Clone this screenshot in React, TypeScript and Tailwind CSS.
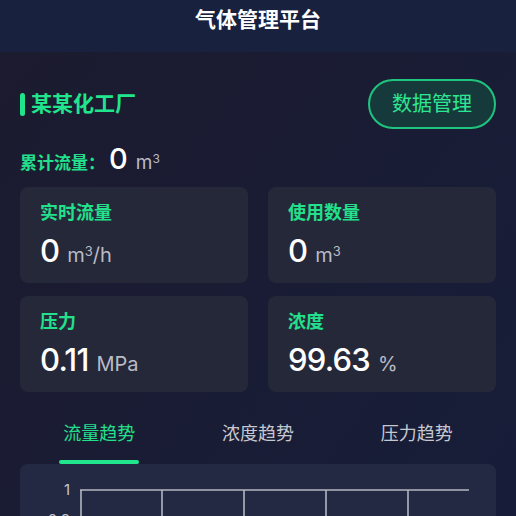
// Gas management dashboard (mobile)
const cjk = { fontFamily: 'Inter, "Noto Sans CJK SC", "Noto Sans", sans-serif' };

interface StatCardProps {
  label: string;
  value: string;
  unit: React.ReactNode;
}

function StatCard({ label, value, unit }: StatCardProps) {
  return (
    <div className="flex h-[96px] flex-col gap-2 rounded-lg bg-[#252839] px-5 py-[14px]">
      <div className="text-[18px] leading-6 font-bold text-[#22e08c]">{label}</div>
      <div className="flex items-baseline gap-2 leading-9">
        <span className="text-[31px] font-medium tracking-tight text-white">{value}</span>
        <span className="text-[20px] text-[#b9bbc6]">{unit}</span>
      </div>
    </div>
  );
}

const tabs = ['流量趋势', '浓度趋势', '压力趋势'];

function TrendChart() {
  const xs = [81, 162, 244, 326, 408];
  return (
    <svg width="476" height="60" viewBox="0 0 476 60" className="block">
      {/* y labels */}
      <text x="50" y="31" fill="#c4c6cf" fontSize="15" textAnchor="end" fontFamily="Inter, sans-serif">1</text>
      <text x="50" y="61" fill="#c4c6cf" fontSize="15" textAnchor="end" fontFamily="Inter, sans-serif">0.8</text>
      {/* grid */}
      <line x1="60" y1="26" x2="449" y2="26" stroke="#b3b6c0" strokeWidth="1.6" />
      <line x1="60" y1="56" x2="449" y2="56" stroke="#b3b6c0" strokeWidth="1.6" />
      {xs.map((x) => (
        <line key={x} x1={x - 20} y1="26" x2={x - 20} y2="60" stroke="#b3b6c0" strokeWidth="1.6" />
      ))}
    </svg>
  );
}

export default function App() {
  return (
    <div className="min-h-screen bg-gradient-to-br from-[#1c1b2f] to-[#161d3a]" style={cjk}>
      {/* Header */}
      <div className="flex h-[52px] justify-center bg-[#18213d] pt-[6px]">
        <h1 className="text-[21px] leading-7 font-bold text-white">气体管理平台</h1>
      </div>

      <div className="px-5">
        {/* Factory name + button */}
        <div className="mt-[27px] flex h-[50px] items-center justify-between">
          <div className="flex items-center gap-[6px]">
            <span className="h-[23px] w-[5px] rounded-full bg-[#20e58c]" />
            <span className="text-[21px] font-bold text-[#20e58c]">某某化工厂</span>
          </div>
          <button className="h-[50px] w-[128px] rounded-full border-2 border-[#1fc57d] bg-[#163a3c] text-[20px] text-[#2ee792]">
            数据管理
          </button>
        </div>

        {/* Total flow */}
        <div className="mt-2 flex h-9 items-baseline">
          <span className="text-[17px] font-bold text-[#22e08c]">累计流量：</span>
          <span className="ml-1 text-[29px] font-medium text-white">0</span>
          <span className="ml-2 text-[19px] text-[#b9bbc6]">
            m<sup className="text-[12px]">3</sup>
          </span>
        </div>

        {/* Stat cards */}
        <div className="mt-[14px] grid grid-cols-2 gap-x-5 gap-y-[13px]">
          <StatCard label="实时流量" value="0" unit={<>m<sup className="text-[13px]">3</sup>/h</>} />
          <StatCard label="使用数量" value="0" unit={<>m<sup className="text-[13px]">3</sup></>} />
          <StatCard label="压力" value="0.11" unit="MPa" />
          <StatCard label="浓度" value="99.63" unit="%" />
        </div>

        {/* Tabs */}
        <div className="mt-[14px] grid grid-cols-3">
          {tabs.map((t, i) => (
            <div key={t} className="flex h-[58px] flex-col items-center pt-4">
              <span className={i === 0 ? 'text-[18px] leading-6 text-[#22e08c]' : 'text-[18px] leading-6 text-[#c6c8d0]'}>{t}</span>
              <span className={i === 0 ? 'mt-[14px] h-1 w-20 rounded-full bg-[#20e58c]' : 'mt-[14px] h-1 w-20'} />
            </div>
          ))}
        </div>

        {/* Chart */}
        <div className="h-[200px] rounded-lg bg-[#242943]">
          <TrendChart />
        </div>
      </div>
    </div>
  );
}
